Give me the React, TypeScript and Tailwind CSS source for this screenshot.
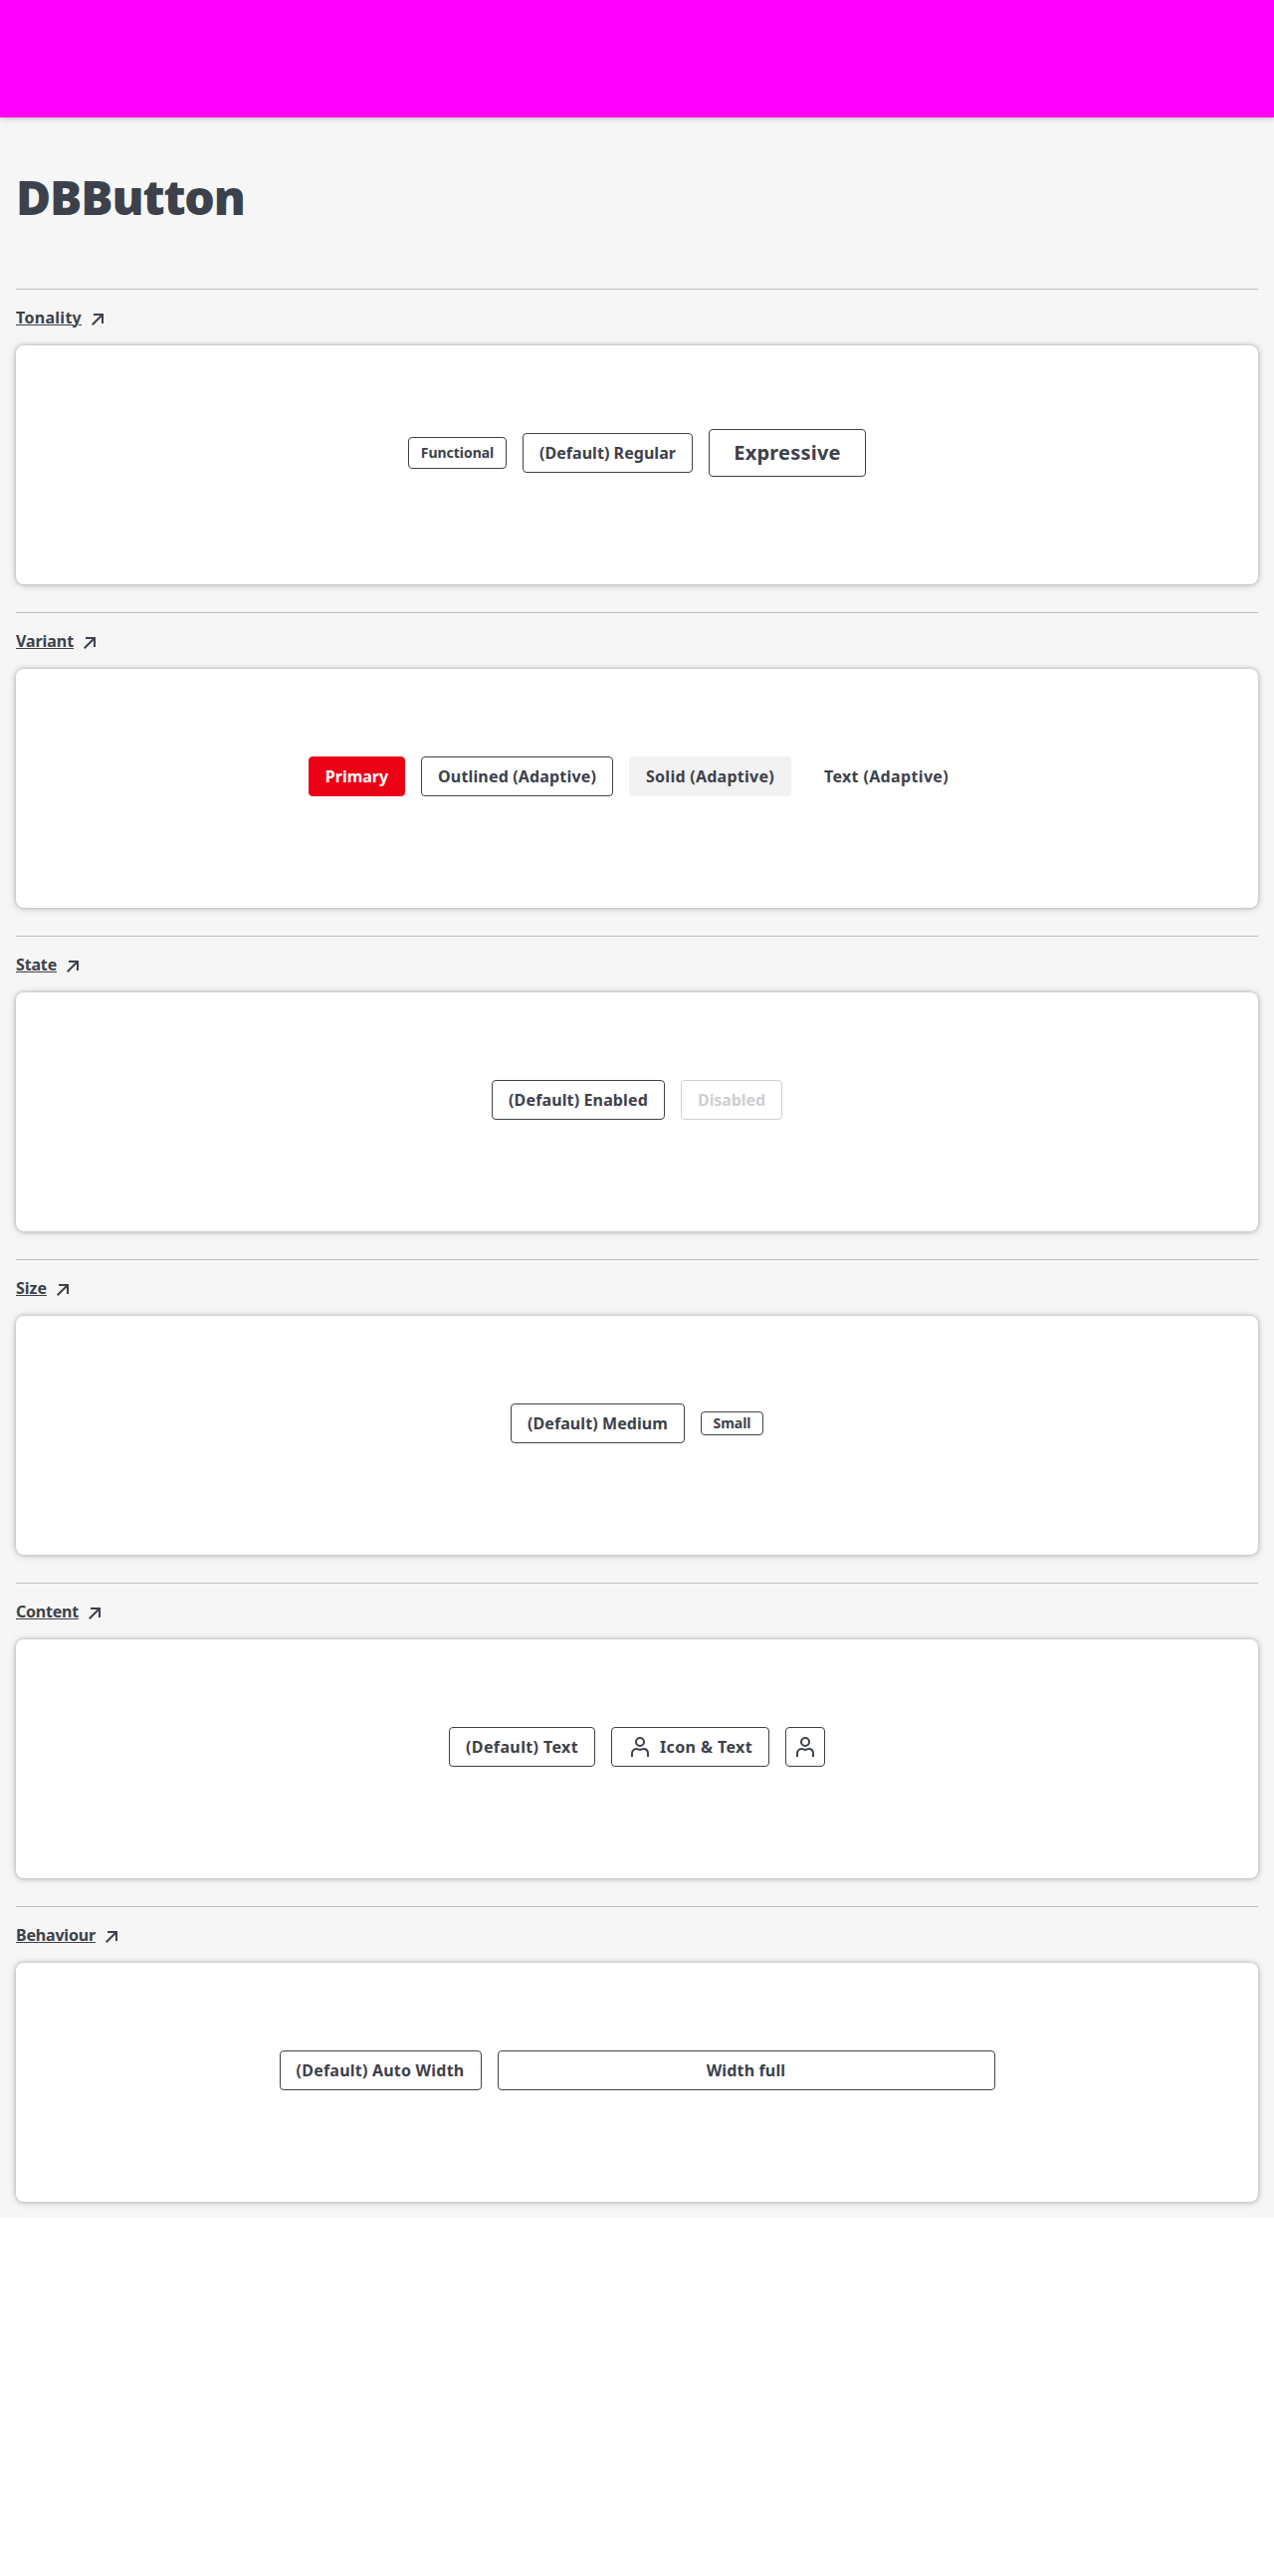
import type { ReactNode } from "react";

const base =
  "flex shrink-0 items-center justify-center whitespace-nowrap rounded-[4px] border font-bold leading-none";
const outlined = "border-[#3c414b] bg-white text-[#3c414b]";
const medium = "h-10 text-base";

function Button({ className, children, label }: { className: string; children?: ReactNode; label?: string }) {
  return (
    <button type="button" aria-label={label} className={`${base} ${className}`}>
      {children}
    </button>
  );
}

function PersonIcon() {
  return (
    <svg width="24" height="24" viewBox="0 0 24 24" fill="none" stroke="currentColor" strokeWidth="2" className="shrink-0">
      <circle cx="12" cy="7" r="4" />
      <path d="M4 22v-3.2c0-2.9 1.7-4.8 4.4-4.8 1.5 0 2 .9 3.6.9s2.1-.9 3.6-.9c2.7 0 4.4 1.9 4.4 4.8V22" />
    </svg>
  );
}

function ArrowIcon() {
  return (
    <svg width="12" height="12" viewBox="0 0 12 12" fill="none" stroke="currentColor" strokeWidth="2" className="mt-1 shrink-0">
      <path d="M2 1h9v9M11 1 .7 11.3" />
    </svg>
  );
}

function Section({ title, tracking, children }: { title: string; tracking: string; children: ReactNode }) {
  return (
    <section className="mb-7">
      <div className="flex h-[57px] items-center border-t border-[#bcbcbc]">
        <a href="#" className="flex items-center gap-[10px] text-base leading-6 font-bold">
          <span className={`underline decoration-1 underline-offset-[1px] ${tracking}`}>{title}</span>
          <ArrowIcon />
        </a>
      </div>
      <div className="flex h-60 items-start justify-center rounded-lg bg-white pt-[84px] shadow-[0_0_4px_rgba(0,0,0,0.24),0_1px_8px_rgba(0,0,0,0.16)]">
        <div className="flex h-12 items-center gap-4">{children}</div>
      </div>
    </section>
  );
}

export default function App() {
  return (
    <div className="h-[2588px] bg-white font-['Noto_Sans',sans-serif] text-[#3c414b]">
      <div className="h-[2228px] bg-[#f6f6f6]">
        <header className="h-[118px] bg-[#ff00ff] shadow-[0_0_4px_rgba(0,0,0,0.2),0_1px_8px_rgba(0,0,0,0.14)]" />
        <main className="px-4">
          <h1 className="flex h-[172px] items-start pt-12 text-[48px] leading-[64px] font-black tracking-[-1.15px]">
            DBButton
          </h1>
          <Section title="Tonality" tracking="tracking-[0.29px]">
            <Button className={`${outlined} h-8 w-[99px] text-sm tracking-[-0.05px]`}>Functional</Button>
            <Button className={`${outlined} ${medium} w-[171px] tracking-[0.05px]`}>(Default) Regular</Button>
            <Button className={`${outlined} h-12 w-[158px] text-xl tracking-[0.2px]`}>Expressive</Button>
          </Section>
          <Section title="Variant" tracking="tracking-[-0.07px]">
            <Button className={`${medium} w-[97px] border-[#ec0016] bg-[#ec0016] text-white`}>Primary</Button>
            <Button className={`${outlined} ${medium} w-[193px] tracking-[0.16px]`}>Outlined (Adaptive)</Button>
            <Button className={`${medium} w-[163px] border-transparent bg-[#f2f2f2] tracking-[0.26px]`}>Solid (Adaptive)</Button>
            <Button className={`${medium} w-[159px] border-transparent tracking-[0.35px]`}>Text (Adaptive)</Button>
          </Section>
          <Section title="State" tracking="tracking-[-0.16px]">
            <Button className={`${outlined} ${medium} w-[174px] tracking-[0.13px]`}>(Default) Enabled</Button>
            <Button className={`${medium} w-[102px] border-[#cecfd1] text-[#cecfd1] tracking-[-0.09px]`}>Disabled</Button>
          </Section>
          <Section title="Size" tracking="tracking-normal">
            <Button className={`${outlined} ${medium} w-[175px] tracking-[0.08px]`}>(Default) Medium</Button>
            <Button className={`${outlined} h-6 w-[63px] text-sm leading-none`}>Small</Button>
          </Section>
          <Section title="Content" tracking="tracking-[-0.21px]">
            <Button className={`${outlined} ${medium} w-[147px] tracking-[0.38px]`}>(Default) Text</Button>
            <Button className={`${outlined} ${medium} w-[159px] gap-2 tracking-[0.4px]`}>
              <PersonIcon />
              <span>Icon &amp; Text</span>
            </Button>
            <Button label="User" className={`${outlined} ${medium} w-10`}>
              <PersonIcon />
            </Button>
          </Section>
          <Section title="Behaviour" tracking="tracking-[-0.19px]">
            <Button className={`${outlined} ${medium} w-[203px] tracking-[0.22px]`}>(Default) Auto Width</Button>
            <Button className={`${outlined} ${medium} w-[500px] tracking-[0.15px]`}>Width full</Button>
          </Section>
        </main>
      </div>
    </div>
  );
}
